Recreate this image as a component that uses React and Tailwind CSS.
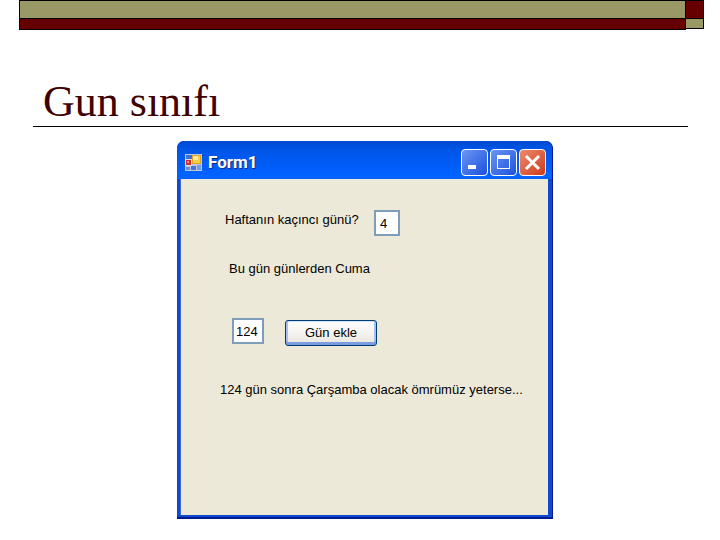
import React, { useState } from 'react';

function FormIcon() {
  return (
    <svg width="17" height="17" viewBox="0 0 17 17" aria-hidden="true">
      <rect x="0" y="0" width="17" height="17" fill="#b9c8e6" />
      <rect x="1" y="1" width="6" height="4" fill="#3f6fd0" />
      <rect x="0" y="5" width="7" height="7" fill="#f0d8d8" />
      <rect x="1" y="6" width="5" height="5" fill="#c8302a" />
      <rect x="2" y="7" width="2" height="2" fill="#ee8d80" />
      <rect x="7" y="1" width="9" height="9" fill="#dfa21c" />
      <rect x="8" y="2" width="7" height="7" fill="#f6cf48" />
      <rect x="8" y="2" width="5" height="4" fill="#fdeb9c" />
      <rect x="1" y="13" width="4" height="3" fill="#6d8fd6" />
      <rect x="6" y="12" width="5" height="4" fill="#4474d4" />
      <rect x="12" y="11" width="4" height="5" fill="#7c9ade" />
    </svg>
  );
}

function CaptionButton({ label, className, children }) {
  return (
    <button
      type="button"
      aria-label={label}
      className={`flex size-[27px] items-center justify-center rounded-[4px] border border-white ${className}`}
    >
      <svg width="25" height="25" viewBox="0 0 25 25" aria-hidden="true">
        {children}
      </svg>
    </button>
  );
}

function Banner() {
  return (
    <div className="mr-4 ml-[19px] flex items-start">
      <div className="flex-1 border border-black">
        <div className="h-[17px] bg-[#999966]" />
        <div className="h-[11px] border-t border-black bg-[#660000]" />
      </div>
      <div className="w-[18px] border border-l-0 border-black">
        <div className="h-[17px] bg-[#660000]" />
        <div className="h-[10px] border-t border-black bg-[#999966]" />
      </div>
    </div>
  );
}

export default function App() {
  const [day, setDay] = useState('4');
  const [count, setCount] = useState('124');

  return (
    <div className="min-h-screen bg-white">
      <Banner />

      <h1 className="mt-12 mr-8 ml-[33px] border-b border-black pl-[10px] font-['Liberation_Serif',serif] text-[44px] leading-[48px] text-[#400000]">
        Gun sınıfı
      </h1>

      <main className="mt-[14px] ml-[177px] w-[376px] overflow-hidden rounded-t-[7px] border-r border-b-2 border-[#001a90] bg-[#1048d0] font-['Liberation_Sans',sans-serif] text-[13px] leading-4 text-black">
        <header className="flex h-[38px] items-center gap-[2px] bg-linear-to-b from-[#0048d0] via-[#0054e6] via-20% to-[#0062ff] to-85% pt-1 pr-[6px] pl-2">
          <FormIcon />
          <h2 className="ml-1 flex-1 font-['Roboto',sans-serif] text-[17px] font-bold text-white [text-shadow:1px_1px_#0a2a80]">Form1</h2>
          <CaptionButton label="Minimize" className="bg-linear-to-br from-[#6c94f4] to-[#1c50dc]">
            <rect x="6" y="15" width="8" height="4" fill="#fff" />
          </CaptionButton>
          <CaptionButton label="Maximize" className="bg-linear-to-br from-[#6c94f4] to-[#1c50dc]">
            <path d="M6 5h13v14H6zM7 9v9h11V9z" fill="#fff" fillRule="evenodd" />
          </CaptionButton>
          <CaptionButton label="Close" className="bg-linear-to-br from-[#ec8a6c] to-[#cc3812]">
            <path d="M6 6l13 13M19 6L6 19" stroke="#fff" strokeWidth="3" />
          </CaptionButton>
        </header>

        <form
          onSubmit={(e) => e.preventDefault()}
          className="mr-1 mb-[2px] ml-[3px] h-[336px] border-l border-[#3a6cd0] bg-[#ece9d8] pt-[31px]"
        >
          <div className="ml-11 flex items-start">
            <label htmlFor="day" className="mt-[2px] w-[149px]">Haftanın kaçıncı günü?</label>
            <input
              id="day"
              type="text"
              value={day}
              onChange={(e) => setDay(e.target.value)}
              className="h-[26px] w-[26px] border-2 border-[#7f9db9] bg-white px-1"
            />
          </div>

          <p className="mt-[25px] ml-12">Bu gün günlerden Cuma</p>

          <div className="mt-[39px] ml-[51px] flex items-center gap-[21px]">
            <input
              type="text"
              aria-label="Eklenecek gün"
              value={count}
              onChange={(e) => setCount(e.target.value)}
              className="h-[26px] w-8 border-2 border-[#7f9db9] bg-white px-[2px]"
            />
            <button
              type="submit"
              className="mt-1 h-[26px] w-[92px] rounded-[3px] border border-[#003c74] bg-linear-to-b from-white to-[#e8e6dc] shadow-[inset_0_-3px_#7c9ce0,inset_2px_0_#a8c0f0,inset_-2px_0_#a8c0f0,inset_0_1px_#cee0fa]"
            >
              Gün ekle
            </button>
          </div>

          <p className="mt-9 ml-[39px]">124 gün sonra Çarşamba olacak ömrümüz yeterse...</p>
        </form>
      </main>
    </div>
  );
}
